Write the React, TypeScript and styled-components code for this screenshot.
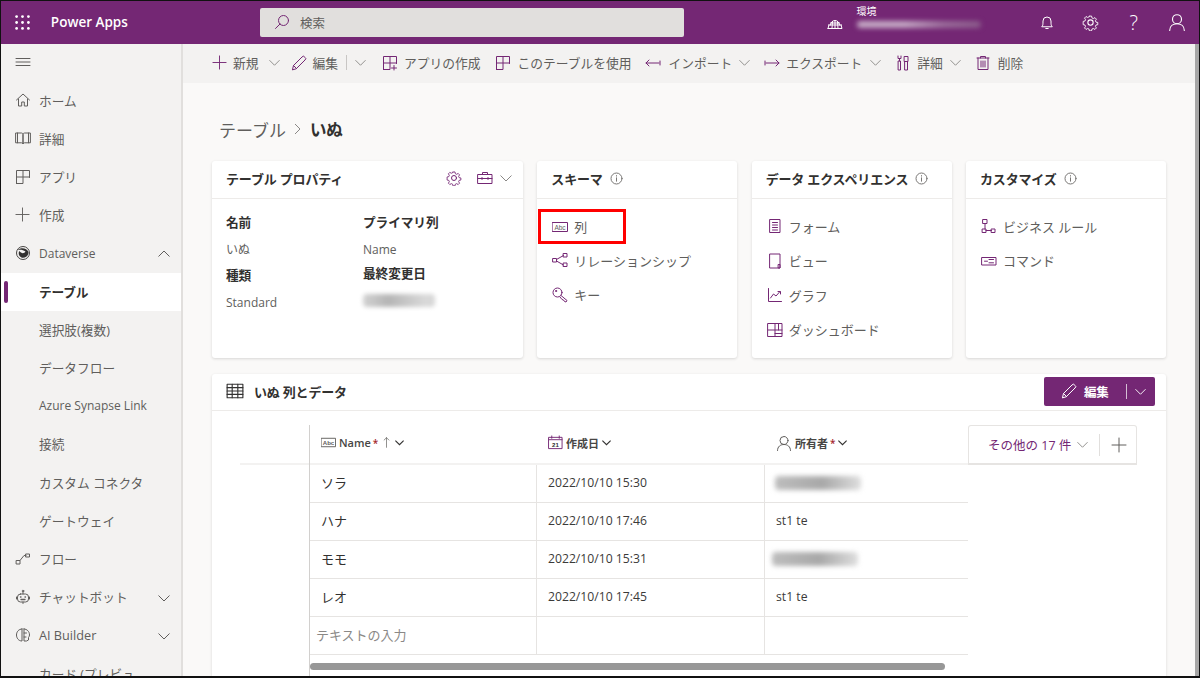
import React from "react";
import styled, { createGlobalStyle } from "styled-components";

const PURPLE = "#742774";
const FONT = `"Open Sans", "Noto Sans CJK JP", sans-serif`;

const Global = createGlobalStyle`
  html, body { margin: 0; padding: 0; background: #fff; overflow: hidden; }
  #root { width: 1201px; height: 679px; }
  * { box-sizing: border-box; }
`;

const Frame = styled.div`
  width: 1200px;
  height: 678px;
  border: 1px solid #111;
  border-top-width: 1px;
  border-bottom-width: 2px;
  display: flex;
  flex-direction: column;
  overflow: hidden;
  font-family: ${FONT};
  color: #3b3a39;
  font-size: 13px;
`;

const Header = styled.header`
  height: 43px;
  flex: none;
  background: ${PURPLE};
  display: flex;
  align-items: center;
  color: #fff;
`;
const Waffle = styled.div`
  width: 50px;
  display: flex;
  justify-content: center;
  padding: 0 7px 1px 0;
  svg { display: block; }
`;
const Brand = styled.div`
  width: 210px;
  font-size: 13.5px;
  font-weight: 600;
  padding-bottom: 1px;
`;
const SearchBox = styled.div`
  width: 425px;
  height: 29px;
  margin-top: -1px;
  background: #e1dfdd;
  border-radius: 2px;
  display: flex;
  align-items: center;
  gap: 10px;
  padding-left: 14px;
  color: #605e5c;
  font-size: 12.5px;
`;
const EnvArea = styled.div`
  margin-left: 143px;
  display: flex;
  align-items: center;
  gap: 14px;
  width: 199px;
`;
const EnvText = styled.div`
  display: flex;
  flex-direction: column;
  gap: 4px;
  margin-top: -12px;
  font-size: 10px;
  line-height: 12px;
`;
const EnvBlur = styled.div`
  width: 124px;
  height: 7px;
  border-radius: 4px;
  background: linear-gradient(90deg, #c6abc6 0%, #c6abc6 38%, #9a6c9a 70%, #8a5a8a 100%);
  filter: blur(2.5px);
`;
const HeaderIconBox = styled.div`
  width: 43.7px;
  height: 43px;
  display: flex;
  align-items: center;
  justify-content: center;
  font-size: 20px;
  font-weight: 300;
  padding-bottom: 1px;
`;

const Body = styled.div`
  flex: 1;
  display: flex;
  min-height: 0;
`;
const Sidebar = styled.nav`
  width: 182px;
  flex: none;
  background: #f3f2f1;
  border-right: 2px solid #e1dfdd;
  overflow: hidden;
`;
const NavRow = styled.div<{ $active?: boolean; $latin?: boolean }>`
  height: 38.2px;
  display: flex;
  align-items: center;
  position: relative;
  padding: 0 0 2px 14px;
  background: ${(p) => (p.$active ? "#fff" : "transparent")};
  color: ${(p) => (p.$active ? "#323130" : "#605e5c")};
  font-weight: ${(p) => (p.$active ? 700 : 400)};
  font-size: ${(p) => (p.$latin ? "12px" : "12.7px")};
  letter-spacing: ${(p) => (p.$active ? "-0.2px" : "0")};
`;
const ActiveMark = styled.span`
  position: absolute;
  left: 3px;
  top: 8px;
  width: 4px;
  height: 22px;
  border-radius: 2px;
  background: ${PURPLE};
`;
const NavIconSlot = styled.span`
  width: 24px;
  flex: none;
  display: flex;
  svg { display: block; }
`;
const NavChevron = styled.span`
  position: absolute;
  right: 11px;
  top: 50%;
  transform: translateY(-50%);
  display: flex;
`;

const Main = styled.main`
  flex: 1;
  min-width: 0;
  background: #faf9f8;
  display: flex;
  flex-direction: column;
  position: relative;
`;
const ScrollTrack = styled.div`
  position: absolute;
  right: 0;
  top: 0;
  bottom: 0;
  width: 4px;
  background: #a6a6a6;
`;
const Toolbar = styled.div`
  height: 39px;
  flex: none;
  background: #f3f2f1;
  display: flex;
  align-items: center;
  padding: 0 0 2px 29px;
  font-size: 12.75px;
  color: #605e5c;
`;
const ToolItem = styled.div<{ $gap?: number; $inner?: number }>`
  display: flex;
  align-items: center;
  gap: ${(p) => p.$inner ?? 6}px;
  margin-right: ${(p) => p.$gap ?? 14}px;
  white-space: nowrap;
  svg { display: block; flex: none; }
`;
const ToolChev = styled.span<{ $ml: number; $mr?: number }>`
  display: flex;
  margin-left: ${(p) => p.$ml}px;
  margin-right: ${(p) => p.$mr ?? 0}px;
`;
const ToolSep = styled.span`
  width: 1px;
  height: 15px;
  background: #c8c6c4;
`;

const Content = styled.div`
  flex: 1;
  min-height: 0;
  padding: 35px 30px 0 29px;
  display: flex;
  flex-direction: column;
`;
const Breadcrumb = styled.div`
  display: flex;
  align-items: center;
  height: 24px;
  gap: 8px;
  font-size: 17px;
  color: #605e5c;
  margin-left: 7px;
  margin-bottom: 19px;
  padding-bottom: 2px;
  b { color: #323130; font-weight: 700; font-size: 16.5px; letter-spacing: -0.3px; margin-left: 1px; }
`;
const CardRow = styled.div`
  display: flex;
  gap: 14.33px;
  margin-bottom: 16px;
`;
const Card = styled.section<{ $w: number }>`
  width: ${(p) => p.$w}px;
  height: 197px;
  flex: none;
  background: #fff;
  border-radius: 3px;
  box-shadow: 0 1px 3px rgba(0, 0, 0, 0.14);
`;
const CardHead = styled.div`
  height: 38px;
  border-bottom: 1px solid #edebe9;
  padding: 0 14px 3px;
  display: flex;
  align-items: center;
  gap: 7px;
  font-size: 13px;
  font-weight: 700;
  color: #323130;
  letter-spacing: -0.17px;
  white-space: nowrap;
`;
const HeadRight = styled.div`
  margin-left: auto;
  display: flex;
  align-items: center;
  gap: 15px;
  margin-right: -3px;
`;
const HeadGroup = styled.div`
  display: flex;
  align-items: center;
  gap: 7px;
`;
const PropsGrid = styled.div`
  display: grid;
  grid-template-columns: 137px 1fr;
  grid-auto-rows: 26.7px;
  padding: 9px 14px 0;
  font-size: 12px;
  color: #605e5c;
`;
const PropLabel = styled.div<{ $raise?: boolean }>`
  font-weight: 700;
  color: #323130;
  font-size: 12.7px;
  letter-spacing: -0.1px;
  display: flex;
  align-items: center;
  padding-bottom: ${(p) => (p.$raise ? 5 : 0)}px;
`;
const PropValue = styled.div`
  display: flex;
  align-items: center;
  padding-top: 2px;
`;
const DateBlur = styled.div`
  width: 72px;
  height: 13px;
  border-radius: 4px;
  margin-top: -3px;
  background: linear-gradient(90deg, #d2d2d2, #b5b5b5 35%, #d8d8d8 85%);
  filter: blur(2px);
`;
const LinkList = styled.div`
  padding-top: 10px;
  display: flex;
  flex-direction: column;
`;
const LinkRow = styled.div`
  height: 34.5px;
  display: flex;
  align-items: center;
  gap: 6px;
  padding-left: 15px;
  font-size: 13px;
  color: #605e5c;
  svg { display: block; flex: none; }
`;
const HighlightedLink = styled.div`
  margin-left: 1px;
  margin-bottom: -1px;
  width: 88px;
  height: 35px;
  border: 3px solid #f00;
  display: flex;
  align-items: center;
  gap: 6px;
  padding-left: 11px;
  font-size: 13px;
  color: #605e5c;
  svg { display: block; flex: none; }
`;

const TableCard = styled.section`
  width: 954px;
  flex: 1;
  background: #fff;
  border-radius: 3px 3px 0 0;
  box-shadow: 0 1px 3px rgba(0, 0, 0, 0.14);
  display: flex;
  flex-direction: column;
  min-height: 0;
`;
const TableHead = styled.div`
  height: 37px;
  flex: none;
  border-bottom: 1px solid #edebe9;
  display: flex;
  align-items: center;
  padding: 0 11px 2px 14px;
  gap: 10px;
  font-size: 13px;
  font-weight: 700;
  color: #323130;
  letter-spacing: -0.2px;
`;
const EditButton = styled.div`
  margin-left: auto;
  width: 111px;
  height: 29px;
  background: ${PURPLE};
  border-radius: 2px;
  color: #fff;
  display: flex;
  align-items: center;
  padding-left: 17px;
  gap: 7px;
  font-size: 12.5px;
  font-weight: 700;
  svg { display: block; flex: none; }
`;
const EditSep = styled.span`
  width: 1px;
  height: 15px;
  background: rgba(255,255,255,.7);
  margin-left: 10px;
  margin-right: 1px;
`;
const TableBody = styled.div`
  flex: 1;
  min-height: 0;
  padding: 14px 0 0 28px;
  display: flex;
`;
const RowGutter = styled.div`
  width: 69px;
  height: 40px;
  flex: none;
  border-bottom: 2px solid #f3f2f1;
`;
const Grid = styled.div`
  width: 659px;
  flex: none;
  border-left: 1px solid #d2d0ce;
  display: flex;
  flex-direction: column;
`;
const GridRow = styled.div<{ $head?: boolean }>`
  display: grid;
  grid-template-columns: 227px 228px 203px;
  height: ${(p) => (p.$head ? "40px" : "38px")};
  border-bottom: ${(p) => (p.$head ? "2px solid #f3f2f1" : "1px solid #e6e4e2")};
  flex: none;
`;
const HeadCell = styled.div`
  display: flex;
  align-items: center;
  gap: 3px;
  padding: 0 0 3px 11px;
  font-size: 11px;
  font-weight: 600;
  color: #484644;
  svg { display: block; flex: none; }
`;
const Req = styled.span`
  color: #a4262c;
  font-size: 10px;
  margin-left: -1px;
`;
const Cell = styled.div<{ $last?: boolean; $ph?: boolean }>`
  display: flex;
  align-items: center;
  padding: 0 0 2px ${(p) => (p.$ph ? 6 : 11)}px;
  border-right: ${(p) => (p.$last ? "none" : "1px solid #e6e4e2")};
  font-size: ${(p) => (p.$ph ? "13px" : "12.2px")};
  color: ${(p) => (p.$ph ? "#8a8886" : "#3b3a39")};
`;
const NameCell = styled(Cell)`
  font-size: 13px;
  color: #323130;
`;
const OwnerBlur = styled.div<{ $off: number }>`
  width: 86px;
  height: 14px;
  margin-left: ${(p) => p.$off}px;
  border-radius: 4px;
  background: linear-gradient(90deg, #bdbdbd, #a8a8a8 55%, #dedede 100%);
  filter: blur(2.5px);
`;
const HScroll = styled.div`
  width: 635px;
  height: 7px;
  border-radius: 4px;
  background: #979797;
  margin-top: 8px;
`;
const MoreButton = styled.div`
  width: 169px;
  height: 40px;
  flex: none;
  border: 1px solid #e6e4e2;
  border-bottom-width: 2px;
  border-radius: 3px 3px 0 0;
  display: flex;
  align-items: center;
  padding-left: 19px;
  gap: 6px;
  font-size: 12.5px;
  color: ${PURPLE};
  svg { display: block; flex: none; }
`;
const MoreSep = styled.span`
  width: 1px;
  height: 22px;
  background: #e1dfdd;
  margin: 0 5px;
`;

type IconProps = { c?: string; s?: number };

const Svg = ({ s = 16, c = "#605e5c", children, vb = "0 0 16 16" }: { s?: number; c?: string; children: React.ReactNode; vb?: string }) => (
  <svg width={s} height={s} viewBox={vb} fill="none" stroke={c} strokeWidth="1" strokeLinecap="round" strokeLinejoin="round">
    {children}
  </svg>
);

const Chevron = ({ c = "#8a8886", s = 11, up, w = 1 }: IconProps & { up?: boolean; w?: number }) => (
  <svg width={s} height={s} viewBox="0 0 12 12" fill="none" stroke={c} strokeWidth={w}>
    <path d={up ? "M0.5 8.5 6 3l5.5 5.5" : "M0.5 3.5 6 9l5.5-5.5"} />
  </svg>
);
const Plus = ({ c = PURPLE, s = 15 }: IconProps) => (
  <Svg s={s} c={c}><path d="M8 1v14M1 8h14" /></Svg>
);
const Pencil = ({ c = PURPLE, s = 16 }: IconProps) => (
  <Svg s={s} c={c}><path d="M1.500 14.500l1-4L11 2a1.600 1.600 0 0 1 2.600 0l.4.4a1.600 1.600 0 0 1 0 2.600L5.500 13.500zM2.500 10.500l3 3" /></Svg>
);
const GridPlus = ({ c = PURPLE, plus }: IconProps & { plus?: boolean }) => (
  <Svg c={c}>
    <path d="M1.500 14.500v-13h13v7M1.500 8h13M8 1.500v13H1.500" />
    {plus && <path d="M12 10.500v4.500M9.500 13h5" />}
  </Svg>
);
const Info = () => (
  <Svg s={13} c="#797775" vb="0 0 13 13">
    <circle cx="6.500" cy="6.500" r="5.500" />
    <path d="M6.500 5.800v3.400M6.500 3.600v.5" />
  </Svg>
);
const Gear = ({ c = PURPLE, s = 16 }: IconProps) => (
  <Svg s={s} c={c}>
    <circle cx="8" cy="8" r="2.500" />
    <path d="M6.800 1h2.400l.4 2 1.500.7 1.800-1 1.600 1.700-1.100 1.700.6 1.500 2 .4v2.400l-2 .4-.6 1.500 1.100 1.700-1.600 1.600-1.800-1-1.500.6-.4 2H6.800l-.4-2-1.500-.6-1.800 1-1.600-1.600 1.100-1.700-.6-1.500-2-.4V6.800l2-.4.6-1.500L1.500 3.200 3.100 1.500l1.800 1 1.500-.7z" transform="translate(1.100 1.100) scale(.86)" />
  </Svg>
);
const AbcIcon = ({ c = PURPLE, s = 16 }: IconProps) => (
  <Svg c={c} s={s}>
    <rect x=".5" y="3.500" width="15" height="9" />
    <text x="8" y="10.500" fontSize="6.500" fill="#605e5c" stroke="none" textAnchor="middle" fontFamily="Liberation Sans">Abc</text>
  </Svg>
);
const Person = ({ c = "#605e5c", s = 16 }: IconProps) => (
  <Svg s={s} c={c}><circle cx="8" cy="5.500" r="4" /><path d="M1.500 15.500c0-4 3-6 6.500-6s6.500 2 6.500 6" /></Svg>
);

const navItems: { label: string; icon?: React.ReactNode; chev?: "up" | "down"; active?: boolean; latin?: boolean }[] = [
  { label: "ホーム", icon: <Svg><path d="M1.500 8 8 2l6.500 6M3.500 7v7h3.200v-4h2.600v4h3.200V7" /></Svg> },
  { label: "詳細", icon: <Svg><path d="M1 3h5.500c.8 0 1.500.6 1.500 1.500V14c0-.8-.7-1.200-1.500-1.200H1zM15 3H9.500C8.700 3 8 3.600 8 4.500V14c0-.8.7-1.200 1.500-1.200H15zM2.500 3v9.800M13.500 3v9.800" /></Svg> },
  { label: "アプリ", icon: <GridPlus c="#605e5c" /> },
  { label: "作成", icon: <Plus c="#605e5c" /> },
  { label: "Dataverse", chev: "up", latin: true, icon: (
    <svg width="16" height="16" viewBox="0 0 16 16" fill="none">
      <circle cx="8" cy="8" r="6.500" stroke="#484644" />
      <path d="M2.500 5C6 2 12 3 13.500 7 14 10.500 10 13.500 6.500 12.500 3.500 11 3 7.500 4.500 6 6 8.500 9 9 10.500 6.500 8 4.500 5 4.500 2.500 5z" fill="#323130" />
    </svg>
  ) },
  { label: "テーブル", active: true },
  { label: "選択肢(複数)" },
  { label: "データフロー" },
  { label: "Azure Synapse Link", latin: true },
  { label: "接続" },
  { label: "カスタム コネクタ" },
  { label: "ゲートウェイ" },
  { label: "フロー", icon: <Svg><rect x="1.500" y="9.500" width="3.500" height="3.500" /><rect x="11" y="3" width="3.500" height="3" /><path d="M5 9.500 9 4.500h2" /></Svg> },
  { label: "チャットボット", chev: "down", icon: <Svg><rect x="2.500" y="5" width="11" height="8" rx="3" /><path d="M8 5V2.500M8 13v1.500M1.500 8v2M14.500 8v2" /><circle cx="8" cy="2" r=".8" /><path d="M5.500 8h.5M10 8h.5M6 10.500h4" strokeWidth="1.300" /></Svg> },
  { label: "AI Builder", chev: "down", icon: <Svg><path d="M7 2C3.500 2 1.500 5 1.500 8s2 6 5.500 6V2zM9 2c3 0 5.500 2.500 5.500 6 0 1-.3 1.500-1 2.500V13l-2 1H9V2zM9 6h2.500M9 10h2" /></Svg> },
  { label: "カード (プレビュ" },
];

const owners = [
  { name: "ソラ", date: "2022/10/10 15:30", blur: -1 },
  { name: "ハナ", date: "2022/10/10 17:46", owner: "st1 te" },
  { name: "モモ", date: "2022/10/10 15:31", blur: -4 },
  { name: "レオ", date: "2022/10/10 17:45", owner: "st1 te" },
];

export default function App() {
  return (
    <Frame>
      <Global />
      <Header>
        <Waffle>
          <svg width="15" height="15" viewBox="0 0 14 14" fill="#fff">
            {[1.500, 7, 12.500].flatMap((y) => [1.500, 7, 12.500].map((x) => <circle key={`${x}-${y}`} cx={x} cy={y} r="1.300" />))}
          </svg>
        </Waffle>
        <Brand>Power Apps</Brand>
        <SearchBox>
          <Svg c={PURPLE}><circle cx="9.500" cy="6.500" r="5" /><path d="M6 10 1.500 14.500" /></Svg>
          検索
        </SearchBox>
        <EnvArea>
          <Svg c="#fff" s={16}>
            <path d="M3.500 10a4.500 4.500 0 0 1 9 0M1.500 10h13M1 13.500h14l-1-3.500M1 13.500 2 10M8 5.500V13.500M5.500 6.500 5 13.500M10.500 6.500l.5 7M3.500 8h9" />
          </Svg>
          <EnvText>
            環境
            <EnvBlur />
          </EnvText>
        </EnvArea>
        <HeaderIconBox>
          <Svg c="#fff" s={16}><path d="M3 12.500c1-1 1-2 1-5.500a4 4 0 0 1 8 0c0 3.500 0 4.500 1 5.500zM6.800 14.500h2.400" /></Svg>
        </HeaderIconBox>
        <HeaderIconBox><Gear c="#fff" s={17} /></HeaderIconBox>
        <HeaderIconBox>?</HeaderIconBox>
        <HeaderIconBox><Person c="#fff" s={18} /></HeaderIconBox>
      </Header>
      <Body>
        <Sidebar>
          <NavRow>
            <Svg><path d="M1 4.500h14M1 8h14M1 11.500h14" /></Svg>
          </NavRow>
          {navItems.map((n) => (
            <NavRow key={n.label} $active={n.active} $latin={n.latin}>
              {n.active && <ActiveMark />}
              <NavIconSlot>{n.icon}</NavIconSlot>
              {n.label}
              {n.chev && <NavChevron><Chevron s={12} c="#605e5c" up={n.chev === "up"} /></NavChevron>}
            </NavRow>
          ))}
        </Sidebar>
        <Main>
          <ScrollTrack />
          <Toolbar>
            <ToolItem $gap={11}><Plus /> 新規 <ToolChev $ml={4}><Chevron /></ToolChev></ToolItem>
            <ToolItem $gap={0} $inner={6}><Pencil /> 編集 <ToolChev $ml={2} $mr={8}><ToolSep /></ToolChev></ToolItem>
            <ToolItem $gap={16}><Chevron /></ToolItem>
            <ToolItem><GridPlus plus /> アプリの作成</ToolItem>
            <ToolItem $inner={7}><GridPlus /> このテーブルを使用</ToolItem>
            <ToolItem $inner={7}>
              <Svg c={PURPLE}><path d="M1 8h13M4 5 1 8l3 3M15 6v4" /></Svg> インポート <ToolChev $ml={0}><Chevron /></ToolChev>
            </ToolItem>
            <ToolItem>
              <Svg c={PURPLE}><path d="M2 8h13M12 5l3 3-3 3M1 6v4" /></Svg> エクスポート <ToolChev $ml={2}><Chevron /></ToolChev>
            </ToolItem>
            <ToolItem>
              <Svg c={PURPLE}><path d="M3 1v2.500h3V1M4.500 3.500V6M3.500 6h2v9h-2zM10 6.500h2.500V15H10zM9.500 1.500h3.500v5H9.500z" /></Svg> 詳細 <ToolChev $ml={1}><Chevron /></ToolChev>
            </ToolItem>
            <ToolItem $inner={7}>
              <Svg c={PURPLE}><path d="M2 3h12M5.500 3V1.500h5V3M3 3v11.500h10V3M6 6v6M8 6v6M10 6v6" /></Svg> 削除
            </ToolItem>
          </Toolbar>
          <Content>
            <Breadcrumb>
              テーブル
              <svg width="7" height="12" viewBox="0 0 7 12" fill="none" stroke="#8a8886"><path d="M1 1l5 5-5 5" /></svg>
              <b>いぬ</b>
            </Breadcrumb>
            <CardRow>
              <Card $w={311}>
                <CardHead>
                  テーブル プロパティ
                  <HeadRight>
                    <Gear />
                    <HeadGroup>
                      <Svg c={PURPLE}><rect x="1" y="4.500" width="14" height="9" /><path d="M5.500 4.500V2.500h5v2M1 8.500h14M5 7.500v2M11 7.500v2" /></Svg>
                      <Chevron s={12} />
                    </HeadGroup>
                  </HeadRight>
                </CardHead>
                <PropsGrid>
                  <PropLabel>名前</PropLabel>
                  <PropLabel>プライマリ列</PropLabel>
                  <PropValue>いぬ</PropValue>
                  <PropValue>Name</PropValue>
                  <PropLabel>種類</PropLabel>
                  <PropLabel $raise>最終変更日</PropLabel>
                  <PropValue>Standard</PropValue>
                  <PropValue><DateBlur /></PropValue>
                </PropsGrid>
              </Card>
              <Card $w={200}>
                <CardHead>スキーマ <Info /></CardHead>
                <LinkList>
                  <HighlightedLink>
                    <AbcIcon />
                    列
                  </HighlightedLink>
                  <LinkRow>
                    <Svg c={PURPLE}><rect x="1" y="6.500" width="3.500" height="3.500" /><rect x="11.500" y="1.500" width="3.500" height="3.500" /><rect x="11.500" y="11" width="3.500" height="3.500" /><path d="M4.500 7.500l7-4M4.500 9l7 4" /></Svg>
                    リレーションシップ
                  </LinkRow>
                  <LinkRow>
                    <Svg c={PURPLE}><circle cx="5.500" cy="5.500" r="4.500" /><path d="M9 8.500l6 5-1 1.500-1.500-.5-1-1.500-1.500-.5-2-2.500" /><circle cx="4" cy="4" r=".6" /></Svg>
                    キー
                  </LinkRow>
                </LinkList>
              </Card>
              <Card $w={200}>
                <CardHead>データ エクスペリエンス <Info /></CardHead>
                <LinkList>
                  <LinkRow>
                    <Svg c={PURPLE}><rect x="3" y="1.500" width="10" height="13" /><path d="M5.500 4.500h5M5.500 7h5M5.500 9.500h5M5.500 12h5" /></Svg>
                    フォーム
                  </LinkRow>
                  <LinkRow>
                    <Svg c={PURPLE}><path d="M3 1h10v14H3z" /><rect x="11.500" y="11.500" width="1.500" height="3.500" /></Svg>
                    ビュー
                  </LinkRow>
                  <LinkRow>
                    <Svg c={PURPLE}><path d="M1.500 1.500v13h13M3.500 11l3-4 2.500 2 4-4.500M11 4.500h2.500V7" /></Svg>
                    グラフ
                  </LinkRow>
                  <LinkRow>
                    <Svg c={PURPLE}><rect x="1" y="1.500" width="14" height="13" /><path d="M1 8h14M8 1.500V14.500M8 11.500h7M11.500 1.500V8" /></Svg>
                    ダッシュボード
                  </LinkRow>
                </LinkList>
              </Card>
              <Card $w={200}>
                <CardHead>カスタマイズ <Info /></CardHead>
                <LinkList>
                  <LinkRow>
                    <Svg c={PURPLE}><rect x="2" y="1.500" width="4" height="4" /><rect x="1.500" y="11" width="3.500" height="3.500" /><rect x="10.500" y="11" width="3.500" height="3.500" /><path d="M4 5.500v5.500M5 12.500h5.500" /></Svg>
                    ビジネス ルール
                  </LinkRow>
                  <LinkRow>
                    <Svg c={PURPLE}><rect x="1" y="4.500" width="14" height="7.500" /><path d="M3.500 8.200h3M8 6.500h4.500M8 9.800h4.500" /></Svg>
                    コマンド
                  </LinkRow>
                </LinkList>
              </Card>
            </CardRow>
            <TableCard>
              <TableHead>
                <Svg s={18} c="#323130"><rect x="1" y="2" width="14" height="12" /><path d="M1 5h14M1 8h14M1 11h14M5.500 2v12M10.500 2v12" /></Svg>
                いぬ 列とデータ
                <EditButton>
                  <Pencil c="#fff" />
                  編集
                  <EditSep />
                  <Chevron c="#fff" />
                </EditButton>
              </TableHead>
              <TableBody>
                <RowGutter />
                <Grid>
                  <GridRow $head>
                    <HeadCell>
                      <AbcIcon c="#605e5c" s={15} />
                      Name <Req>*</Req>
                      <Svg s={11} c="#605e5c"><path d="M8 15V1M4.500 4.500 8 1l3.500 3.500" /></Svg>
                      <Chevron s={9} c="#323130" w={1.500} />
                    </HeadCell>
                    <HeadCell>
                      <Svg c={PURPLE} s={15}><rect x="1" y="2.500" width="14" height="12" /><path d="M1 5h14M4 1v2.500M12 1v2.500" /><text x="8" y="12.500" fontSize="6.500" fill="#323130" stroke="none" textAnchor="middle" fontFamily="Liberation Sans">21</text></Svg>
                      作成日
                      <Chevron s={9} c="#323130" w={1.500} />
                    </HeadCell>
                    <HeadCell>
                      <Person />
                      所有者 <Req>*</Req>
                      <Chevron s={9} c="#323130" w={1.500} />
                    </HeadCell>
                  </GridRow>
                  {owners.map((r) => (
                    <GridRow key={r.name}>
                      <NameCell>{r.name}</NameCell>
                      <Cell>{r.date}</Cell>
                      <Cell $last>{r.owner ?? <OwnerBlur $off={r.blur ?? 0} />}</Cell>
                    </GridRow>
                  ))}
                  <GridRow>
                    <Cell $ph>テキストの入力</Cell>
                    <Cell />
                    <Cell $last />
                  </GridRow>
                  <HScroll />
                </Grid>
                <MoreButton>
                  その他の 17 件
                  <Chevron s={11} />
                  <MoreSep />
                  <Plus c="#605e5c" s={16} />
                </MoreButton>
              </TableBody>
            </TableCard>
          </Content>
        </Main>
      </Body>
    </Frame>
  );
}
